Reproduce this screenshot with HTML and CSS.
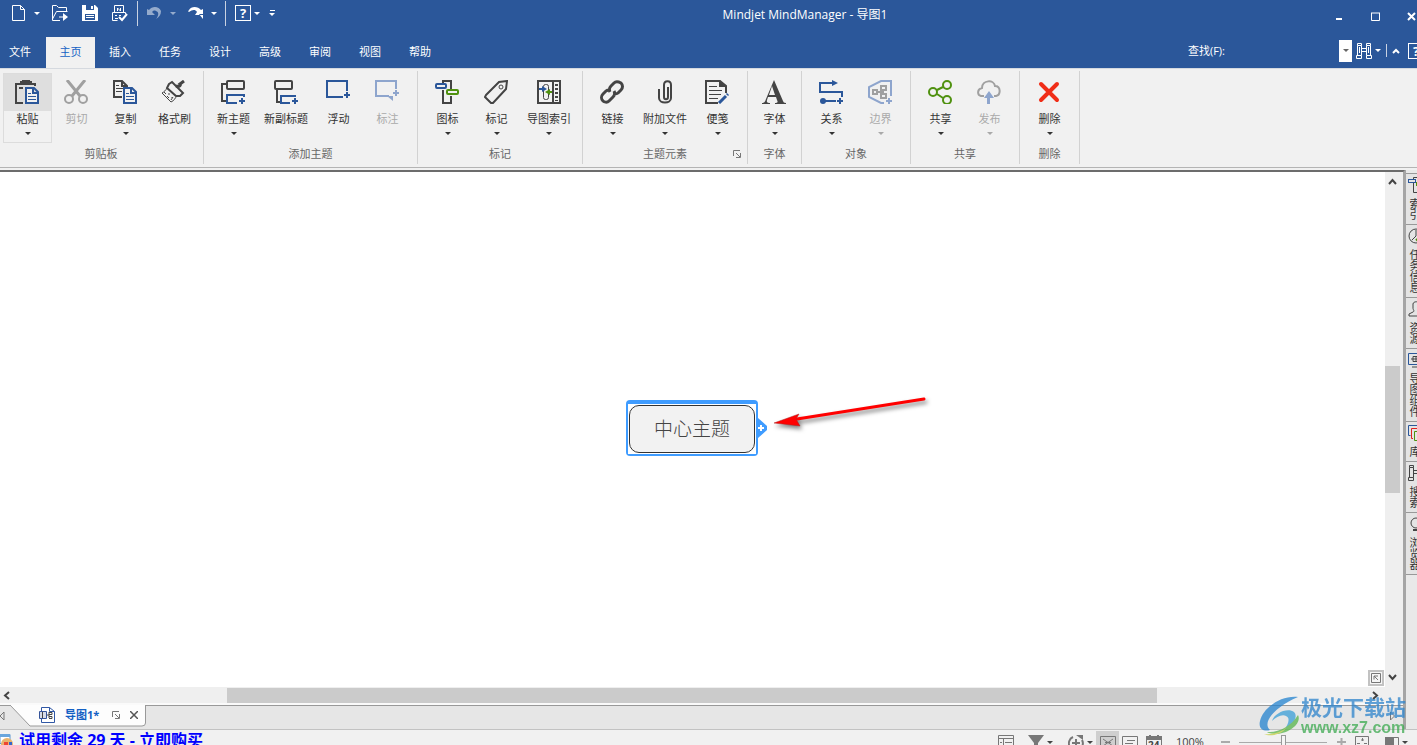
FILE: index.html
```html
<!DOCTYPE html>
<html lang="zh-CN">
<head>
<meta charset="utf-8">
<title>Mindjet MindManager - 导图1</title>
<link rel="stylesheet" href="styles.css">
</head>
<body>
<header class="top">
  <div class="titlebar">
    <div class="quick">
      <button class="q" aria-label="新建"><svg width="16" height="18" viewBox="0 0 16 18"><path d="M1.500 1.500h8l4 4v11h-12z M9.500 1.500v4h4"/></svg></button>
      <button class="q drop" aria-label="新建选项"><i class="caret"></i></button>
      <button class="q" aria-label="打开"><svg width="18" height="18" viewBox="0 0 18 18"><path d="M9 16.500H1.500v-15h4l2 2h8v4 M1.500 15L5.500 7.500h11 M8 13h7"/><path class="w" d="M12 9l5 4-5 4z"/></svg></button>
      <button class="q gap" aria-label="保存"><svg width="16" height="16" viewBox="0 0 16 16"><path class="w" d="M0 0h13l3 3v13H0z"/><path class="b" d="M4 0h8v5H4z M3 9h10v6H3z"/><path class="w" d="M9 1h2v3H9z M4 10h8v1H4z M4 12h8v1H4z"/></svg></button>
      <button class="q gap" aria-label="打印"><svg width="17" height="17" viewBox="0 0 17 17"><path d="M3.500 7.500v-7h9v7 M14.500 9V7.500h-13v8h5 M6.500 3v3 M6.500 3l3 3V3 M4 10.500h2 M8 10.500h2 M4 13.500h3"/><path class="thick" d="M8 12l3 3 5-6"/></svg></button>
      <span class="bar"></span>
      <button class="q dim" aria-label="撤消"><svg width="16" height="14" viewBox="0 0 16 14"><path class="w" d="M0 3l2 1c3-4 10-4 12 1 0 4-2 6-5 8 3-4 3-7 0-8-2-1-3 0-4 1l3 3H0z"/></svg></button>
      <button class="q drop dim" aria-label="撤消列表"><i class="caret"></i></button>
      <button class="q redo" aria-label="恢复"><svg width="16" height="14" viewBox="0 0 16 14"><path class="w" d="M15 3l-2 1C10 0 3 0 1 4c-1 1-1 2 0 2 3-2 6-3 8 0L7 9h8z M11 8h4v5z"/></svg></button>
      <button class="q drop" aria-label="恢复列表"><i class="caret"></i></button>
      <span class="bar second"></span>
      <button class="q help" aria-label="帮助"><span class="qmark">?</span></button>
      <button class="q tight" aria-label="帮助选项"><i class="caret"></i></button>
      <button class="q more" aria-label="自定义"><i class="dash"></i><i class="caret"></i></button>
    </div>
    <h1 class="title">Mindjet MindManager - 导图1</h1>
    <div class="window">
      <button aria-label="最小化"><svg width="9" height="10" viewBox="0 0 9 10"><path class="thick" d="M1 8h6"/></svg></button>
      <button aria-label="最大化"><svg width="9" height="9" viewBox="0 0 9 9"><path d="M.5 1v7.500h8V1 M0 1h9" /></svg></button>
      <button aria-label="关闭"><svg width="9" height="9" viewBox="0 0 9 9"><path class="thick" d="M1 1l7 7M8 1l-7 7"/></svg></button>
    </div>
  </div>
  <div class="tabrow">
    <nav class="tabs">
      <button class="tab file">文件</button><button class="tab on">主页</button><button class="tab">插入</button><button class="tab">任务</button><button class="tab">设计</button><button class="tab">高级</button><button class="tab">审阅</button><button class="tab">视图</button><button class="tab">帮助</button>
    </nav>
    <div class="find">
      <label for="find">查找(F):</label>
      <input id="find" type="text">
      <button class="combo" aria-label="查找历史"><i class="caret"></i></button>
      <button class="bino" aria-label="查找"><svg width="16" height="16" viewBox="0 0 16 16"><path d="M1.500.500h4v2h-4z M10.500.500h4v2h-4z M1.500 2.500v10 M5.500 2.500v10 M10.500 2.500v10 M14.500 2.500v10 M3.500 4v6 M12.500 4v6 M5.500 5.500h5 M5.500 8.500h5 M.5 12.500h5v3h-5z M10.500 12.500h5v3h-5z"/></svg></button>
      <button class="tight" aria-label="查找选项"><i class="caret"></i></button>
      <span class="bar short"></span>
      <button class="fold" aria-label="折叠功能区"><svg width="8" height="6" viewBox="0 0 8 6"><path class="thick" d="M1 5l3-3 3 3"/></svg></button>
      <button class="edge" aria-label="帮助主题"><span class="qmark">?</span></button>
    </div>
  </div>
</header>

<section class="ribbon">
  <div class="group clip">
    <div class="tools">
      <button class="tool sel"><span class="ic"><svg viewBox="0 0 24 24"><path class="k" d="M8 23H1V4h19v2"/><path class="kf" d="M5 1h2V0h8v1h2v4H5z M4 7h4v2H4z"/><path class="bl" fill="#f1f1f1" d="M11 8h8l4 4v11H11z M18 8v5h5"/><path class="bl thin" d="M13 13.500h3 M13 16.500h8 M13 19.500h8"/></svg></span><span>粘贴</span><i class="caret"></i></button>
      <button class="tool off"><span class="ic"><svg viewBox="0 0 24 24"><path class="g w3" d="M3 0l13 16M21 0L8 16"/><circle class="g" cx="5" cy="19" r="4"/><circle class="g" cx="19" cy="19" r="4"/></svg></span><span>剪切</span></button>
      <button class="tool"><span class="ic"><svg viewBox="0 0 24 24"><path class="k" d="M9 17H1V1h8l5 5v2 M9 1v5h5"/><path class="k thin" d="M3 5.500h3 M3 8.500h7 M3 11.500h6"/><path class="bl" fill="#f1f1f1" d="M11 8h8l4 4v11H11z M18 8v5h5"/><path class="bl thin" d="M13 13.500h3 M13 16.500h8 M13 19.500h8"/></svg></span><span>复制</span><i class="caret"></i></button>
      <button class="tool"><span class="ic"><svg viewBox="0 0 24 24"><path class="k" d="M7 4l3-2 11 11-3 3H14L5 8z"/><path class="k w3" d="M14 6c4 1 5-1 4-2l4-3"/><path class="k thin" d="M5 8c-1 2-3 4-5 5l9 9c3-1 4-4 6-6 M2 12l2 2 M5 16l2 2 M9 20l2-3 M7 13v2 M10 17v1"/></svg></span><span>格式刷</span></button>
    </div>
    <h2>剪贴板</h2>
  </div>
  <div class="group">
    <div class="tools">
      <button class="tool"><span class="ic"><svg viewBox="0 0 24 24"><rect class="k" x="6" y="1" width="17" height="8" rx="1"/><path class="k" d="M5 4H1v17h4"/><path class="bl" d="M23 17v-2H6v8h10 M18 21h6 M21 18v6"/></svg></span><span>新主题</span><i class="caret"></i></button>
      <button class="tool wide"><span class="ic"><svg viewBox="0 0 24 24"><rect class="k" x="1" y="1" width="17" height="8" rx="1"/><path class="k" d="M3 9v13h4"/><path class="bl" d="M21 17v-1H7v7h9 M18 21h6 M21 18v6"/></svg></span><span>新副标题</span></button>
      <button class="tool"><span class="ic"><svg viewBox="0 0 24 24"><path class="bl" d="M17 17H1V1h20v10 M18 15h6 M21 12v6"/></svg></span><span>浮动</span></button>
      <button class="tool off"><span class="ic"><svg viewBox="0 0 24 24"><path class="lb" d="M14 16H1V1h20v8 M18 13h6 M21 10v6"/><path fill="#8ea5cd" d="M12 16h6v5z"/></svg></span><span>标注</span></button>
    </div>
    <h2>添加主题</h2>
  </div>
  <div class="group">
    <div class="tools">
      <button class="tool"><span class="ic"><svg viewBox="0 0 24 24"><path class="k" d="M8 3V1h8v8 M8 10v13h8v-7"/><rect class="bl" x="1" y="4" width="10" height="4" rx="1"/><rect class="gr" x="12" y="10" width="11" height="4" rx="1"/></svg></span><span>图标</span><i class="caret"></i></button>
      <button class="tool"><span class="ic"><svg viewBox="0 0 24 24"><path class="k" d="M2 15L15 2l8-1-1 8L9 23H7l-6-6z"/><circle class="k thin" cx="17" cy="7" r="2"/></svg></span><span>标记</span><i class="caret"></i></button>
      <button class="tool wide"><span class="ic"><svg viewBox="0 0 24 24"><path class="k" d="M1 1h22v22H1z M16 1v22"/><path class="k dots" d="M19.500 4v17"/><rect class="k thin" x="6.500" y="4.500" width="5" height="15" rx="2"/><path fill="#2b579a" d="M2 8h3V6l5 3-5 3v-2H2z"/><path fill="#4f910f" d="M15 11h-2V9l-5 3 5 3v-2h2z"/></svg></span><span>导图索引</span><i class="caret"></i></button>
    </div>
    <h2>标记</h2>
  </div>
  <div class="group">
    <div class="tools">
      <button class="tool"><span class="ic"><svg viewBox="0 0 24 24"><path class="k w3" d="M10 12c-1-2-1-4 1-6l3-3c2-2 5-1 7 0 2 2 2 5 0 7l-3 3c-1 1-3 1-4 1 M14 11c1 2 1 4-1 6l-4 4c-2 2-5 1-6 0-2-2-2-5 0-7l3-3c1-1 3-1 4-1"/></svg></span><span>链接</span><i class="caret"></i></button>
      <button class="tool wide"><span class="ic"><svg viewBox="0 0 24 24"><path class="k" d="M15 7v10c0 3-4 3-4 0V5c0-5 7-5 7 0v13c0 6-12 6-12 0V9"/></svg></span><span>附加文件</span><i class="caret"></i></button>
      <button class="tool"><span class="ic"><svg viewBox="0 0 24 24"><path class="k" d="M13 23H1V1h14l6 5v7 M15 1v5h6"/><path class="kf" d="M15 1l6 6h-6z"/><path class="k thin" d="M4 6.500h8 M4 10.500h13 M4 14.500h12 M4 18.500h9"/><path class="bl w3" d="M14 23l7-7"/><path class="bl w3" d="M22 15l1-1"/></svg></span><span>便笺</span><i class="caret"></i></button>
    </div>
    <h2>主题元素</h2>
    <button class="launch" aria-label="主题元素选项"><svg width="8" height="8" viewBox="0 0 8 8"><path class="s" d="M.5 6V.5H7 M3 3l4 4 M7.500 3v4.500H3"/></svg></button>
  </div>
  <div class="group slim">
    <div class="tools">
      <button class="tool"><span class="ic"><svg viewBox="0 0 24 24"><path class="kf" fill-rule="evenodd" d="M12 0l9 21c.5 1 1 2 3 2v1H13v-1c3 0 3-1 2-3l-1-3H6l-1 3c-.5 2 0 3 3 3v1H0v-1c2 0 3-1 4-4z M10 6l-3 9h6z"/></svg></span><span>字体</span><i class="caret"></i></button>
    </div>
    <h2>字体</h2>
  </div>
  <div class="group">
    <div class="tools">
      <button class="tool"><span class="ic"><svg viewBox="0 0 24 24"><path class="bl" d="M14 3H1v9h22v5 M4 21h13 M18 21h6 M21 18v6"/><path fill="#2b579a" d="M13 0l6 3-6 3z"/><circle cx="4" cy="21" r="3" fill="#2b579a"/></svg></span><span>关系</span><i class="caret"></i></button>
      <button class="tool off"><span class="ic"><svg viewBox="0 0 24 24"><path class="lb" d="M23 16V1H13L1 7v10l12 6h3 M18 21h6 M21 18v6"/><path class="g" d="M5 10h4v4H5z M13 6h5v4h-5z M13 14h5v4h-5z M9 12h6 M15 10v4"/></svg></span><span>边界</span><i class="caret"></i></button>
    </div>
    <h2>对象</h2>
  </div>
  <div class="group">
    <div class="tools">
      <button class="tool"><span class="ic"><svg viewBox="0 0 24 24"><g class="gr"><circle cx="5" cy="12" r="4"/><circle cx="19" cy="5" r="4"/><circle cx="19" cy="20" r="4"/><path d="M9 10l6-3 M9 14l6 4"/></g></svg></span><span>共享</span><i class="caret"></i></button>
      <button class="tool off"><span class="ic"><svg viewBox="0 0 24 24"><path class="g" d="M7 16H4c-4-1-4-7 1-8 0-8 12-9 13-2 6 0 6 9 1 10h-2"/><path fill="#8ea5cd" d="M12 11l5 7h-4v6h-3v-6H7z"/></svg></span><span>发布</span><i class="caret"></i></button>
    </div>
    <h2>共享</h2>
  </div>
  <div class="group">
    <div class="tools">
      <button class="tool"><span class="ic"><svg viewBox="0 0 24 24"><path stroke="#f02d17" stroke-width="4" stroke-linecap="round" d="M4 4l16 16M20 4L4 20"/></svg></span><span>删除</span><i class="caret"></i></button>
    </div>
    <h2>删除</h2>
  </div>
</section>

<main class="work">
  <div class="doc">
    <div class="view">
      <div class="canvas">
        <div class="topic">
          <div class="shape">中心主题</div>
          <svg class="plus" width="9" height="20" viewBox="0 0 9 20"><path fill="#3f9cff" d="M0 0l9 8v4l-9 8z"/><path stroke="#fff" stroke-width="2" d="M0 10h6M3 7v6"/></svg>
          <svg class="arrow" width="164" height="44" viewBox="0 0 164 44"><g class="shade"><path stroke="#f00" stroke-width="3" stroke-linecap="round" d="M24 24L151 4"/><path fill="#f00" stroke="#a22" stroke-width=".5" d="M1 28l25-9-3 5 4 7z"/></g></svg>
        </div>
        <button class="split" aria-label="导航"><svg width="10" height="10" viewBox="0 0 10 10"><path stroke="#777" d="M.5.500h9v9h-9z M3 6.500V3h4 M3 3l4 4"/></svg></button>
      </div>
      <div class="vbar">
        <svg width="9" height="7" viewBox="0 0 9 7"><path class="k" d="M1 6l3.500-4L8 6"/></svg>
        <div class="vtrack"><div class="vthumb"></div></div>
        <svg width="9" height="7" viewBox="0 0 9 7"><path class="k" d="M1 1l3.500 4L8 1"/></svg>
      </div>
    </div>
    <div class="hbar">
      <svg width="7" height="9" viewBox="0 0 7 9"><path class="k" d="M6 1L2 4.500 6 8"/></svg>
      <div class="htrack"><div class="hthumb"></div></div>
      <svg width="7" height="9" viewBox="0 0 7 9"><path class="k" d="M1 1l4 3.500L1 8"/></svg>
    </div>
    <div class="sheets">
      <button class="roll" aria-label="向左"><svg width="5" height="10" viewBox="0 0 5 10"><path stroke="#777" d="M0 5l4-4v8z"/></svg></button>
      <div class="sheet">
        <svg class="flap" viewBox="0 0 136 22" preserveAspectRatio="none"><path fill="#fdfdfd" stroke="#999" d="M0 0l20 21h112q3.500 0 3.500-3V0"/></svg>
        <svg class="mapic" width="16" height="16" viewBox="0 0 16 16"><path stroke="#2f57a5" fill="#fff" d="M2.500.500h8l5 4v11h-13z M10.500.500v4h5"/><path stroke="#35549a" fill="#d8dce8" d="M.5 4.500h7v7h-7z"/><path stroke="#444" d="M3.500 5v6 M8 8h2 M10 5v6 M10 5.500h3v2h-3 M10 9.500h3v2h-3"/></svg>
        <button class="name">导图1*</button>
        <button aria-label="还原"><svg width="8" height="8" viewBox="0 0 8 8"><path class="s" d="M.5 6V.5H7 M3 3l4 4 M7.500 3v4.500H3"/></svg></button>
        <button aria-label="关闭导图"><svg width="8" height="8" viewBox="0 0 8 8"><path stroke="#555" stroke-width="1.500" d="M0 0l8 8M8 0L0 8"/></svg></button>
      </div>
      <button class="roll right" aria-label="向右"><svg width="5" height="10" viewBox="0 0 5 10"><path stroke="#777" d="M.5 1l4 4-4 4z"/></svg></button>
    </div>
  </div>
  <aside class="side">
    <button><svg width="16" height="16" viewBox="0 0 16 16"><path class="k thin" d="M5.500 3V.5h5V5 M5.500 6v9.500h5V9"/><rect class="bl thin" x=".5" y="2.500" width="7" height="3"/><rect class="gr thin" x="8.500" y="5.500" width="7" height="3"/></svg><span>索引</span></button>
    <button><svg width="16" height="16" viewBox="0 0 16 16"><circle class="k thin" cx="8" cy="8" r="7"/><path class="k thin" d="M8 2v6l-4 4"/><path class="gr" d="M8 11l3 3 4-5"/></svg><span>任务信息</span></button>
    <button><svg width="16" height="16" viewBox="0 0 16 16"><path class="k thin" d="M1 15v-2l4-2c2-1 0-2 0-4V3c0-3 7-3 7 0v4c0 2-2 3 0 4l3 2v2z"/></svg><span>资源</span></button>
    <button><svg width="16" height="16" viewBox="0 0 16 16"><path class="bl thin" d="M.5 1.500h15v11h-15z"/><path class="k thin" d="M4 15h9 M3 7h10 M5 4.500h6v5H5z M8 4v6"/></svg><span>导图组件</span></button>
    <button><svg width="16" height="16" viewBox="0 0 16 16"><path class="bl thin" d="M2.500 10.500h-2V.5h9v2"/><path stroke="#d22" d="M5 13.500H3.500v-10H12V5"/><path class="gr thin" d="M6.500 6.500h9v9h-9z"/></svg><span>库</span></button>
    <button><svg width="16" height="16" viewBox="0 0 16 16"><path class="k thin" d="M1.500.500h4v2h-4z M10.500.500h4v2h-4z M1.500 2.500v10 M5.500 2.500v10 M10.500 2.500v10 M14.500 2.500v10 M5.500 5.500h5 M5.500 8.500h5 M.5 12.500h5v3h-5z M10.500 12.500h5v3h-5z"/></svg><span>搜索</span></button>
    <button><svg width="16" height="16" viewBox="0 0 16 16"><circle class="k thin" cx="8" cy="7" r="5"/><path class="k" d="M5 14h6"/></svg><span>浏览器</span></button>
  </aside>
</main>

<footer class="status">
  <a class="trial" href="#"><svg width="14" height="16" viewBox="0 0 14 16"><path stroke="#5b96cf" fill="#fff" d="M0 1.500h10v9H0z"/><path fill="#6aa6dd" d="M0 1h10v3H0z"/><circle cx="7" cy="11" r="6" fill="#e8b36e"/><path fill="#e43" d="M4 9h4v5H4z"/><path fill="#36c" d="M9 9h3v4H9z"/></svg><span>试用剩余 29 天 - 立即购买</span></a>
  <div class="tray">
    <button class="s1" aria-label="大纲"><svg width="16" height="16" viewBox="0 0 16 16"><path class="s" d="M.5.500h15v15H.5z M0 3.500h16 M5.500 3v12 M2 7.500h2 M2 10.500h2 M7 7.500h7 M7 10.500h7"/></svg></button>
    <button class="s2" aria-label="筛选"><svg width="16" height="16" viewBox="0 0 16 16"><path class="sf" d="M0 0h16l-6 8v8l-4-3V8z"/></svg><i class="caret"></i></button>
    <button class="s3" aria-label="详细程度"><svg width="16" height="16" viewBox="0 0 16 16"><path class="s w2" d="M5 2a7 7 0 1 0 9 3 M8 4v8 M4 8h8"/><path class="sf" d="M8 0h7v5z"/></svg><i class="caret"></i></button>
    <button class="s4" aria-label="导图视图"><svg width="16" height="14" viewBox="0 0 16 14"><path class="s" d="M.5.500h15v13H.5z M3 3l10 7 M13 3L3 10 M5 6.500h6"/></svg></button>
    <button class="s5" aria-label="大纲视图"><svg width="16" height="14" viewBox="0 0 16 14"><path class="s" d="M.5.500h15v13H.5z M5 4.500h8 M3 7.500h8"/></svg></button>
    <button class="s6" aria-label="日程视图"><svg width="16" height="16" viewBox="0 0 16 16"><path class="s" d="M.5 1.500h15v14H.5z"/><path class="sf" d="M0 1h3V0h2v1h6V0h2v1h3v4H0z"/></svg><b>24</b></button>
    <span class="pct">100%</span>
    <button class="s7" aria-label="缩小"><svg width="9" height="9" viewBox="0 0 9 9"><path stroke="#aaa" stroke-width="2" d="M0 4h9"/></svg></button>
    <input class="zoom" type="range" min="0" max="100" value="50" aria-label="缩放">
    <button class="s8" aria-label="放大"><svg width="9" height="9" viewBox="0 0 9 9"><path stroke="#aaa" stroke-width="2" d="M0 4h9M4.500 0v9"/></svg></button>
    <button class="s9" aria-label="适合窗口"><svg width="14" height="14" viewBox="0 0 14 14"><path class="s" d="M.5.500h13v13H.5z M7.500 2v3 M6 4h3 M2 7.500h3 M9 7.500h3 M7.500 9v3"/></svg></button>
    <button class="s10" aria-label="任务窗格"><svg width="14" height="12" viewBox="0 0 14 12"><path class="s" d="M.5.500h13v11H.5z"/><path class="sf" d="M0 0h9v12H0z"/></svg><i class="caret"></i></button>
  </div>
</footer>

<div class="mark">
  <svg width="42" height="40" viewBox="0 0 42 40"><path fill="#2483cf" d="M39 1C22-1 4 12 1 25c-2 8 4 11 10 9C3 27 14 12 39 1z"/><path fill="#3a9fd8" d="M13 25c2-8 16-14 22-9 5 5-2 15-11 20 5-7 8-14 3-16-4-2-10 1-14 5z"/><path fill="#57b44b" d="M39 19c4 8-8 18-21 19-5 0-9-1-10-2 10 1 24-5 31-17z"/><path fill="#c6cf42" d="M5 38c9 1 17-2 22-6-5 7-17 9-22 6z"/></svg>
  <div><strong>极光下载站</strong><em>www.xz7.com</em></div>
</div>
</body>
</html>
```
FILE: styles.css
```css
* { box-sizing: border-box; }
body {
  margin: 0;
  height: 100vh;
  display: flex;
  flex-direction: column;
  overflow: hidden;
  position: relative;
  background: #f1f1f1;
  color: #333;
  font: 11px/16px "Open Sans", "Noto Sans CJK SC", sans-serif;
}
button {
  display: flex;
  align-items: center;
  justify-content: center;
  padding: 0;
  border: 0;
  background: none;
  color: inherit;
  font: inherit;
}
svg { display: block; fill: none; flex: none; }
h1, h2 { margin: 0; font: inherit; }
.caret {
  border: 3px solid transparent;
  border-top-color: currentColor;
  border-bottom: 0;
}

/* Icon strokes */
.k { stroke: #444; stroke-width: 2; }
.kf { fill: #444; }
.bl { stroke: #2b579a; stroke-width: 2; }
.lb { stroke: #8ea5cd; stroke-width: 2; }
.g { stroke: #a0a0a0; stroke-width: 2; }
.gr { stroke: #4f910f; stroke-width: 2; }
.thin { stroke-width: 1; }
.w3 { stroke-width: 3; }
.dots { stroke-dasharray: 2 2; stroke-width: 3; }
.s { stroke: #777; }
.w2 { stroke-width: 2; }
.sf { fill: #777; }

/* Title and tabs */
.top { background: #2b579a; color: #fff; overflow: hidden; flex: none; }
.top svg { stroke: #fff; }
.top .w { fill: #fff; stroke: none; }
.top .b { fill: #2b579a; stroke: none; }
.top .thick { stroke-width: 2; }
.titlebar { display: flex; align-items: center; height: 26px; margin-bottom: 11px; }
.quick { display: flex; align-items: center; padding-left: 11px; }
.q { height: 22px; }
.q.drop { width: 21px; padding-right: 1px; }
.quick > .q:nth-child(2) { margin-right: 3px; }
.q.gap { margin-left: 13px; }
.q.redo { margin-left: 4px; }
.dim { opacity: .5; }
.bar { width: 1px; height: 25px; background: #c9d2e2; margin: 0 9px; }
.bar.second { margin-left: 0; }
.qmark {
  width: 16px;
  height: 16px;
  border: 1px solid #fff;
  font: bold 13px/14px "Open Sans", sans-serif;
  text-align: center;
  flex: none;
}
.tight { width: 12px; }
.more { flex-direction: column; gap: 2px; width: 18px; }
.dash { width: 5px; height: 1px; background: #fff; }
.title {
  flex: 1;
  padding: 3px 6px 0 0;
  text-align: center;
  font-size: 12px;
  line-height: 23px;
}
.window { display: flex; align-items: center; gap: 27px; padding: 6px 1px 0 0; }
.tabrow { display: flex; justify-content: space-between; }
.tabs { display: flex; }
.tab { width: 50px; height: 31px; padding-bottom: 2px; }
.tab.file { width: 46px; padding-right: 6px; }
.tab.on { width: 49px; background: #f1f1f1; color: #1461c4; }
.find { display: flex; align-items: center; padding-bottom: 4px; }
.find input {
  width: 110px;
  height: 22px;
  margin-left: 4px;
  border: 0;
  background: transparent;
  color: #fff;
  font: inherit;
}
.combo { width: 13px; height: 22px; background: #fff; color: #666; margin-right: 4px; }
.short { height: 13px; margin: 0 6px 0 2px; }
.fold { width: 8px; margin-left: -1px; margin-right: 8px; }
.edge { width: 9px; justify-content: flex-start; }

/* Ribbon */
.ribbon {
  display: flex;
  flex: none;
  padding: 2px 0 3px;
  border-top: 1px solid #d5d9df;
  border-bottom: 1px solid #b4b4b4;
}
.group {
  position: relative;
  padding: 2px 5px 0;
  border-right: 1px solid #d2d2d2;
}
.group.clip { padding: 2px 4px 0 3px; }
.group.slim { padding: 2px 2px 0; }
.tools { display: flex; }
.tool {
  width: 49px;
  height: 70px;
  flex-direction: column;
  justify-content: flex-start;
  white-space: nowrap;
}
.tool.wide { width: 56px; }
.tool.off { color: #a9a9a9; }
.tool .ic { display: flex; align-items: center; width: 100%; height: 38px; padding-left: 12px; }
.tool.wide .ic { padding-left: 16px; }
.tool .ic svg { width: 24px; height: 24px; }
.tool .caret { margin-top: 5px; }
.tool.sel { outline: 1px solid #dcdcdc; outline-offset: -1px; }
.tool.sel .ic { background: #dedede; }
.group h2 { padding: 3px 0; text-align: center; color: #666; line-height: 15px; }
.group .launch { position: absolute; right: 6px; bottom: 6px; }

/* Document area */
.work { flex: 1; display: flex; min-height: 0; padding-top: 2px; }
.doc {
  flex: 1;
  min-width: 0;
  display: flex;
  flex-direction: column;
  border-top: 2px solid #6c6c6c;
  border-right: 2px solid #a5a5a5;
}
.view { flex: 1; display: flex; min-height: 0; }
.canvas {
  flex: 1;
  position: relative;
  display: flex;
  align-items: center;
  justify-content: center;
  padding: 0 1px 3px 0;
  background: #fff;
}
.topic {
  position: relative;
  padding: 5px 3px 3px;
  border-radius: 4px;
  background: linear-gradient(#fff, #fff) 2px 4px / calc(100% - 4px) calc(100% - 6px) no-repeat #3f9cff;
}
.shape {
  padding: 9px 24px;
  border: 1px solid #333;
  border-radius: 10px;
  background: #f2f2f2;
  color: #444;
  font-size: 19px;
  line-height: 28px;
  font-weight: 300;
}
.plus { position: absolute; left: 100%; top: 18px; }
.arrow { position: absolute; left: 147px; top: -5px; }
.shade { filter: drop-shadow(2px 3px 2px rgba(0, 0, 0, .5)); }
.split {
  position: absolute;
  right: 1px;
  bottom: 1px;
  width: 16px;
  height: 16px;
  border: 2px solid #c2c2c2;
  background: #f5f5f5;
}
.vbar {
  width: 18px;
  padding: 6px 3px 6px 0;
  display: flex;
  flex-direction: column;
  align-items: center;
  background: #efefef;
}
.vtrack { flex: 1; width: 100%; padding: 181px 0 0; }
.vthumb { height: 127px; background: #cbcbcb; }
.hbar {
  display: flex;
  align-items: center;
  height: 16px;
  padding: 0 24px 0 3px;
  background: #efefef;
}
.htrack { flex: 1; padding: 0 15.6% 0 15.8%; }
.hthumb { height: 15px; background: #cbcbcb; }
.sheets {
  display: flex;
  height: 26px;
  padding: 0 8px 3px 0;
  border-top: 2px solid #fafafa;
  background: #e6e6e6;
  box-shadow: inset 0 1px #999;
}
.sheet {
  position: relative;
  display: flex;
  align-items: center;
  gap: 10px;
  width: 136px;
  height: 22px;
  margin-left: 5px;
  padding: 0 7px 2px 29px;
}
.sheet .name { color: #1461c4; font-weight: bold; margin-right: 3px; }
.sheet > * { position: relative; }
.sheet .flap { position: absolute; inset: 0; width: 100%; height: 100%; }
.roll.right { margin-left: auto; }
.side {
  width: 12px;
  overflow: hidden;
  border-left: 1px solid #a5a5a5;
  background: #e9e9e9;
  padding-top: 3px;
}
.side button {
  flex-direction: column;
  align-items: flex-start;
  gap: 5px;
  width: 24px;
  padding: 3px 2px 4px;
  border-top: 1px solid #999;
  background: #e4e4e4;
}
.side button:last-child { border-bottom: 1px solid #999; }
.side span { writing-mode: vertical-rl; text-orientation: upright; line-height: 12px; }

/* Status bar */
.status {
  display: flex;
  flex: none;
  justify-content: space-between;
  align-items: flex-start;
  height: 16px;
  overflow: hidden;
  border-top: 1px solid #c2c2c2;
}
.trial {
  display: flex;
  gap: 5px;
  color: #00f;
  text-decoration: none;
  font-size: 16px;
  line-height: 20px;
  font-weight: bold;
  white-space: nowrap;
}
.trial svg { margin-top: 3px; }
.tray { display: flex; align-items: flex-start; padding: 1px 9px 0 0; color: #444; }
.tray button { position: relative; height: 23px; gap: 3px; }
.s1 { margin-right: 14px; }
.s2 { margin-right: 15px; }
.s3 { margin-right: 3px; }
.tray .s4 { width: 23px; margin-right: 3px; background: #cfcfcf; }
.s5 { margin-right: 8px; }
.s6 { margin-right: 14px; }
.s6 b { position: absolute; top: 7px; left: 2px; font-size: 10px; line-height: 14px; }
.pct { width: 45px; line-height: 21px; }
.s7 { margin-right: 9px; }
.zoom {
  appearance: none;
  width: 88px;
  height: 24px;
  margin: 0 10px 0 0;
  background: linear-gradient(#aaa, #aaa) 0 11px / 100% 1px no-repeat;
}
.zoom::-webkit-slider-thumb {
  appearance: none;
  width: 5px;
  height: 16px;
  border: 1px solid #999;
  background: #f5f5f5;
}
.s8 { margin-right: 9px; }
.s9 { margin-right: 16px; }

/* Site badge */
.mark {
  position: absolute;
  right: 11px;
  bottom: 8px;
  display: flex;
  align-items: center;
  pointer-events: none;
  opacity: .75;
}
.mark strong, .mark em { display: block; font-style: normal; font-weight: bold; }
.mark strong { color: #2d84cc; font-size: 21px; line-height: 24px; }
.mark em { color: #3caa50; font: bold 16px/18px "Liberation Sans", sans-serif; }
```
